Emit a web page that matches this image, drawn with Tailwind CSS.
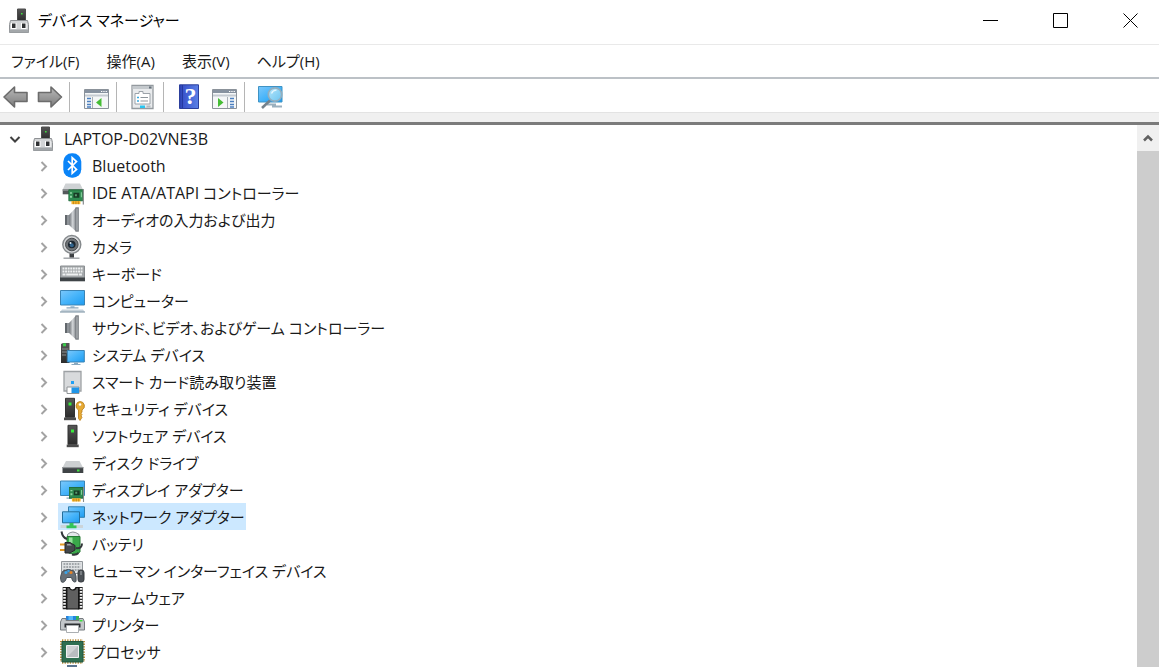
<!DOCTYPE html>
<html lang="ja">
<head>
  <meta charset="UTF-8" />
  <meta name="viewport" content="width=device-width, initial-scale=1.0" />
  <title>デバイス マネージャー</title>
  <script src="https://cdn.jsdelivr.net/npm/@tailwindcss/browser@4"></script>
</head>
<body class="flex h-screen flex-col overflow-hidden bg-white font-['Open_Sans','Noto_Sans_CJK_JP',sans-serif] text-[15px] leading-[27px] text-[#1a1a1a] [font-feature-settings:'palt']">

  <!-- icon sprite, kept in the render tree so its gradients resolve -->
  <svg class="absolute size-0" aria-hidden="true">
    <defs>
      <linearGradient id="gBlue" x1="0" y1="0" x2="1" y2="1"><stop offset="0" stop-color="#7cc8fb" /><stop offset=".5" stop-color="#46b4fa" /><stop offset="1" stop-color="#1e9bf0" /></linearGradient>
      <linearGradient id="gSky" x1="0" y1="0" x2="1" y2="1"><stop offset="0" stop-color="#b4e6fb" /><stop offset="1" stop-color="#6cc4f0" /></linearGradient>
      <linearGradient id="gSteel" x1="0" y1="0" x2="1" y2="0"><stop offset="0" stop-color="#777b80" /><stop offset=".5" stop-color="#d4d7da" /><stop offset="1" stop-color="#7d8186" /></linearGradient>
      <linearGradient id="gArrow" x1="0" y1="0" x2="0" y2="1"><stop offset="0" stop-color="#b9b9b9" /><stop offset="1" stop-color="#7c7c7c" /></linearGradient>
      <linearGradient id="gDark" x1="0" y1="0" x2="0" y2="1"><stop offset="0" stop-color="#565656" /><stop offset="1" stop-color="#2c2c2c" /></linearGradient>
      <linearGradient id="gLight" x1="0" y1="0" x2="0" y2="1"><stop offset="0" stop-color="#eceeef" /><stop offset="1" stop-color="#b4b8bb" /></linearGradient>
      <linearGradient id="gHelp" x1="0" y1="0" x2="1" y2="0"><stop offset="0" stop-color="#2a3fae" /><stop offset=".2" stop-color="#3a55cc" /><stop offset="1" stop-color="#5b80e6" /></linearGradient>
    </defs>
    <symbol id="root" viewBox="0 0 22 27">
      <path d="M9.500 2h8v12h-8z" fill="url(#gDark)" stroke="#4c4c4c" />
      <path d="M13 6h1.600v1.600H13z" fill="#3fe03f" />
      <path d="M2.500 13.500h17l1 4v8h-19v-8z" fill="#d3d5d7" stroke="#8e9194" />
      <path d="M1.500 22.500h19v3h-19z" fill="#a3a7aa" />
      <path d="M3 16h5.500v6H3zM13 16h5.500v6H13z" fill="#fff" />
      <path d="M4 16.500h3.500v4.500H4zM14 16.500h3.500v4.500H14z" fill="#303234" />
    </symbol>
    <symbol id="bluetooth" viewBox="0 0 26 27">
      <rect x="4.300" y="1.200" width="18" height="24.500" rx="8.500" fill="#0a84f8" />
      <path d="M9 9l8.500 8.500-4.300 3.800V5.700l4.300 3.800L9 18" fill="none" stroke="#fff" stroke-width="1.700" />
    </symbol>
    <symbol id="card" viewBox="0 0 16 16">
      <path d="M0 1h14.500v11H0z" fill="#2e8b50" stroke="#1f6a3a" />
      <path d="M5 4h6v5H5z" fill="#173b25" />
      <path d="M6.500 5.500h2v2h-2z" fill="#5a9b70" />
      <path d="M1.500 3.500h2v1.500h-2zM1.500 7h2v2h-2zM12.500 3.500h1v5h-1z" fill="#8ed6a4" />
      <path d="M3 12.200h9v3.300H3z" fill="#f5b52c" />
      <path d="M5 12.500v3M7.500 12.500v3M10 12.500v3" stroke="#a8690c" stroke-width=".6" />
      <path d="M15 0v16" stroke="#85898c" stroke-width="1.200" />
    </symbol>
    <symbol id="ide" viewBox="0 0 26 27">
      <path d="M6.500 4.500h14.500l3 6H3.700z" fill="#cfd2d4" />
      <path d="M3.700 10.300h20.300v5H3.700z" fill="#55595c" />
      <path d="M3.700 10.300h20.300v1.500H3.700z" fill="#8f9396" />
      <use href="#card" x="9.500" y="9.800" width="15.800" height="16" />
    </symbol>
    <symbol id="speaker" viewBox="0 0 26 27">
      <path d="M6 9h5v10H6z" fill="#63686d" />
      <path d="M8 9h3v10H8z" fill="#8f9499" />
      <path d="M10.500 8.500L17 1.500v24l-6.500-6z" fill="url(#gSteel)" />
      <path d="M16.500 1.300h3.300v24.400h-3.300z" fill="#74797e" />
      <path d="M17.500 2.500h1v22h-1z" fill="#bfc3c6" />
    </symbol>
    <symbol id="camera" viewBox="0 0 26 27">
      <path d="M4.500 25.200h16" stroke="#9da1a4" stroke-width="1.400" />
      <path d="M10.500 20h4.500v4.500h-4.500z" fill="#3c3f42" />
      <circle cx="12.800" cy="11.500" r="9" fill="#d5d7d9" stroke="#85898c" stroke-width="1.400" />
      <circle cx="12.800" cy="11.500" r="6.300" fill="#6e7276" stroke="#4a4d50" />
      <circle cx="12.800" cy="11.500" r="3.800" fill="#1c2630" />
      <circle cx="12.800" cy="12.200" r="2" fill="#30648e" />
      <circle cx="11.500" cy="9.900" r="1" fill="#dceaf4" />
    </symbol>
    <symbol id="keyboard" viewBox="0 0 26 27">
      <path d="M1.500 6h24v13.500h-24z" fill="#a4a8ab" stroke="#8b8f92" />
      <path d="M3.500 8.500h20M3.500 11.500h20" stroke="#eff1f2" stroke-width="2" stroke-dasharray="1.900 .7" />
      <path d="M3.500 14.500h20" stroke="#eff1f2" stroke-width="2" stroke-dasharray="3 .7 12 .7" />
      <path d="M1 17.500h25v3.800H1z" fill="#3f4447" />
    </symbol>
    <symbol id="computer" viewBox="0 0 26 27">
      <path d="M1.500 3.500h24v14.500h-24z" fill="url(#gBlue)" stroke="#3a84b5" />
      <path d="M11.500 18.500h4v2.500h-4z" fill="#a9c6da" />
      <path d="M7.500 20.300h12v1.200h-12z" fill="#87a3b8" />
      <path d="M3 22.500h21l2 2.700H1z" fill="#c5d1da" />
      <path d="M1 24.500h25v1H1z" fill="#8298a8" />
    </symbol>
    <symbol id="system" viewBox="0 0 26 27">
      <path d="M2 3l2-1h6.500v20H2z" fill="url(#gDark)" />
      <path d="M4 2.300h3v3H4z" fill="#39c94a" />
      <path d="M3 8h6.500M3 11h5M3 14h4" stroke="#8b8f92" />
      <path d="M8.300 9.500h17v11.500h-17z" fill="url(#gBlue)" stroke="#3a84b5" />
      <path d="M15 21.500h4v1.500h-4zM12.500 23h9v1h-9z" fill="#8aa9bf" />
    </symbol>
    <symbol id="smartcard" viewBox="0 0 26 27">
      <path d="M5 3.500h17v19.500H5z" fill="#d8dadc" stroke="#9da1a4" stroke-width="1.300" />
      <path d="M12 13h3v3h-3z" fill="#20a0f5" />
      <path d="M8 19h12v6.500H8z" fill="#fff" stroke="#8f9396" />
      <path d="M12.500 19.500h7.500v5.500h-7.500z" fill="#2196e8" />
    </symbol>
    <symbol id="security" viewBox="0 0 26 27">
      <path d="M6.500 3.300h9v19h-9z" fill="url(#gDark)" stroke="#333" />
      <path d="M5 22.500h12v2.700H5z" fill="#4b4b4b" />
      <path d="M9.500 7.500h3v3h-3z" fill="#38e83c" />
      <path d="M21 6.500a4.500 4.500 0 0 1 2 8.500v2l-1 1.300 1 1.300-1 1.300 1 1.400-2 3.200-1.500-2V15a4.500 4.500 0 0 1 1.500-8.500z" fill="#e6aa35" stroke="#b87c17" stroke-width=".8" />
      <circle cx="21" cy="9.500" r="1.300" fill="#fff" />
    </symbol>
    <symbol id="software" viewBox="0 0 26 27">
      <path d="M9 3.300h9v19H9z" fill="url(#gDark)" stroke="#333" />
      <path d="M7.700 22.500h12v2.700h-12z" fill="#4b4b4b" />
      <path d="M12 7.500h3v3h-3z" fill="#38e83c" />
    </symbol>
    <symbol id="disk" viewBox="0 0 26 27">
      <path d="M7 12h13.500l3.500 6.500H3.500z" fill="#cdd0d2" />
      <path d="M3.500 18h20.800v6H3.500z" fill="#3f4346" />
      <path d="M3.500 18h20.800v1.200H3.500z" fill="#8e9295" />
      <path d="M18 20.500h2.500v2H18z" fill="#3fe03f" />
    </symbol>
    <symbol id="display" viewBox="0 0 26 27">
      <path d="M1.500 5h24v14.500h-24z" fill="url(#gBlue)" stroke="#3a84b5" />
      <path d="M7.500 21.500h5v1.200h-5z" fill="#87a3b8" />
      <use href="#card" x="10" y="10.500" width="15.500" height="15.500" />
    </symbol>
    <symbol id="network" viewBox="0 0 26 27">
      <path d="M1.500 22h22.500v3H1.500z" fill="#ccd4d9" />
      <path d="M9.500 3.800h16v10.500h-16z" fill="url(#gBlue)" stroke="#2f7fae" />
      <path d="M3.500 8.800h17v11h-17z" fill="url(#gBlue)" stroke="#236f9c" />
      <path d="M10.500 20h4v2.500h3v2.800h-10v-2.800h3z" fill="#33c35a" />
    </symbol>
    <symbol id="battery" viewBox="0 0 26 27">
      <path d="M8.500 4.500q5-5 11.500 0v3H8.500z" fill="#e3e7e9" stroke="#8b9094" />
      <path d="M8 6.500h13V22q-6.500 4-13 0z" fill="#3aa84a" stroke="#247a33" />
      <path d="M10 7.500h3.500v15H10z" fill="#96e29b" />
      <path d="M2.500 1.500q1 6 5.500 7.500M17 18q6 1 6-4.500M13 24.500q4 1 6.500-1.500" fill="none" stroke="#33373a" stroke-width="2" />
      <path d="M1 14.500h5.500M1 20h5.500" stroke="#e39b25" stroke-width="1.800" />
      <path d="M6 12.500h5l5 3v4.500l-5 3H6z" fill="#44484b" stroke="#232628" />
      <path d="M8 14h3l2 1.500H8z" fill="#9ca1a5" />
    </symbol>
    <symbol id="hid" viewBox="0 0 26 27">
      <path d="M2.500 4.500h21v12h-21z" fill="#dfe2e4" stroke="#92979b" />
      <path d="M4.500 7h17M4.500 10h17M4.500 13h17" stroke="#8d9296" stroke-width="1.600" stroke-dasharray="1.800 1" />
      <path d="M4 14q5-3 11 0 3 5 2 10.500-3 2-4.500-4h-5q-1.500 6-5 4.500Q0 20 4 14z" fill="#687077" stroke="#485057" />
      <circle cx="7" cy="15.500" r="1.500" fill="#39a6ec" /><circle cx="12" cy="15.500" r="1.500" fill="#e78325" />
      <circle cx="9.500" cy="14" r="1.200" fill="#3d9dde" />
      <rect x="19" y="13" width="6" height="12" rx="2.500" fill="#4b5055" stroke="#34383c" />
      <path d="M22 14v4" stroke="#a8adb1" />
    </symbol>
    <symbol id="firmware" viewBox="0 0 26 27">
      <path d="M3.700 3h5v22.300h-5zM18.700 3h5v22.300h-5z" fill="#222" />
      <path d="M5.500 4v20.500M22 4v20.500" stroke="#f4f4f4" stroke-width="2.600" stroke-dasharray="1.700 1.300" />
      <path d="M7.800 3.500h2.700q.5 2.500 3.200 2.500T17 3.500h2.700v21.500H7.800z" fill="#606060" stroke="#111" stroke-width="1.200" />
    </symbol>
    <symbol id="printer" viewBox="0 0 26 27">
      <path d="M7 5h13v5H7z" fill="#2584df" />
      <path d="M9.500 5H14v5H9.500z" fill="#55b8fa" /><path d="M17 5h3v4h-3z" fill="#35b35a" />
      <path d="M3 7.500h4v2h13v-2h4l1.500 3.500v8h-24v-8z" fill="#c2c6c9" stroke="#777c80" />
      <path d="M5.500 12.500h16v4h-16z" fill="#2c2f32" />
      <path d="M20.500 9h3v1.500h-3z" fill="#3fe03f" />
      <path d="M7.500 14.500h12v7h-12z" fill="#fff" stroke="#abafb2" />
    </symbol>
    <symbol id="processor" viewBox="0 0 26 27">
      <path d="M3 2.300h21M3 24.700h21" stroke="#bb9140" stroke-width="2" stroke-dasharray="1.300 1.300" />
      <path d="M2 3v21M25 3v21" stroke="#bb9140" stroke-width="2" stroke-dasharray="1.300 1.300" />
      <path d="M3 3.500h21v20.500H3z" fill="#2f6f51" stroke="#205640" />
      <path d="M7.500 7.500h12v12h-12z" fill="#d0d3d5" stroke="#f1f2f2" />
      <path d="M8 19l11-11v11z" fill="#b9bdc0" />
    </symbol>
    <symbol id="port" viewBox="0 0 26 27">
      <path d="M8 0h10v5H8z" fill="#5b7590" />
    </symbol>
  </svg>

  <header class="flex h-[45px] shrink-0 items-center border-b border-[#e9e9e9] text-black">
    <svg class="mb-1 ml-2 h-[27px] w-[22px]"><use href="#root" /></svg>
    <h1 class="ml-2 grow pb-1">デバイス マネージャー</h1>
    <div class="flex gap-[14px] pb-[3px]">
      <button class="flex h-10 w-14 items-center justify-center" aria-label="最小化">
        <svg class="size-4" viewBox="0 0 16 16" stroke="#000"><path d="M0 7.500h15" /></svg>
      </button>
      <button class="flex h-10 w-14 items-center justify-center" aria-label="最大化">
        <svg class="size-4" viewBox="0 0 16 16" fill="none" stroke="#000"><path d="M.5.5h14v14H.5z" /></svg>
      </button>
      <button class="flex h-10 w-14 items-center justify-center" aria-label="閉じる">
        <svg class="size-4" viewBox="0 0 16 16" stroke="#000"><path d="M.5.5l14 14M14.500.5l-14 14" /></svg>
      </button>
    </div>
  </header>

  <nav class="flex h-[34px] shrink-0 items-center gap-[27px] border-b-2 border-[#bcc1c6] pl-[11px]">
    <button>ファイル(F)</button>
    <button>操作(A)</button>
    <button>表示(V)</button>
    <button>ヘルプ(H)</button>
  </nav>

  <div class="flex h-[33px] shrink-0 pt-[3px]" role="toolbar" aria-label="ツール バー">
    <div class="flex gap-[9px] border-r border-[#b5b5b5] pr-[6px] pb-px pl-[2px]">
      <button aria-label="戻る"><svg class="size-[26px]" viewBox="0 0 26 26"><path d="M2 13L12.500 3v5.500H25v9H12.500V23z" fill="url(#gArrow)" stroke="#6c6c6c" stroke-width="1.600" stroke-linejoin="round" /></svg></button>
      <button aria-label="進む"><svg class="size-[26px]" viewBox="0 0 26 26"><path d="M24.500 13L14 3v5.500H1.500v9H14V23z" fill="url(#gArrow)" stroke="#6c6c6c" stroke-width="1.600" stroke-linejoin="round" /></svg></button>
    </div>
    <div class="flex border-r border-[#b5b5b5] pr-[7px] pb-px pl-[13px]">
      <button aria-label="コンソール ツリーの表示"><svg class="size-[26px]" viewBox="0 0 26 26">
        <path d="M1.500 5.500h24v19h-24z" fill="#f5f7f8" stroke="#8b929a" />
        <path d="M2 6h23v3H2z" fill="#8792a0" /><path d="M18 7.500h6" stroke="#fff" stroke-dasharray="1.300 1" />
        <path d="M2 10.500h23v2H2z" fill="#c5cbd2" />
        <path d="M9.500 13v11" stroke="#a9afb6" /><path d="M4 14.500h4M4 17.500h4M4 20.500h4M4 23h4" stroke="#4b7fc0" stroke-width="1.500" />
        <path d="M18.500 14v9L13 18.500z" fill="#45bd35" />
      </svg></button>
    </div>
    <div class="flex border-r border-[#b5b5b5] pr-[7px] pb-px pl-[13px]">
      <button aria-label="プロパティ"><svg class="size-[26px]" viewBox="0 0 26 26">
        <path d="M2 1.500h21v23H2z" fill="#e9ebed" stroke="#949a9f" stroke-width="1.300" />
        <path d="M2.500 2h20v3h-20z" fill="#c4c9cd" /><path d="M19 2.500h2.500v2H19z" fill="#66707a" />
        <path d="M5 9.500h4v-2h4v2h7v10.500H5z" fill="#fff" stroke="#9ca3aa" />
        <path d="M7 13.500h2M7 17h2" stroke="#36a9df" stroke-width="1.600" /><path d="M10.500 13.500h7.500M10.500 17h7.500" stroke="#8d959c" stroke-width="1.200" />
        <path d="M10 21.500h5v2.500h-5z" fill="#27c5f1" /><path d="M16.500 21.500h4v2h-4z" fill="#b3bac0" />
      </svg></button>
    </div>
    <div class="flex gap-[9px] border-r border-[#b5b5b5] pr-[6px] pb-px pl-[13px]">
      <button aria-label="ヘルプ"><svg class="size-[26px]" viewBox="0 0 26 26">
        <path d="M2.500.8h19v23.700h-19z" fill="url(#gHelp)" stroke="#2c3f9c" />
        <path d="M5.500 1v23" stroke="#2439a0" />
        <text x="13.500" y="20" text-anchor="middle" font-family="Liberation Serif" font-size="24" font-weight="bold" fill="#fff">?</text>
      </svg></button>
      <button aria-label="操作ウィンドウの表示"><svg class="size-[26px]" viewBox="0 0 26 26">
        <path d="M.5 5.500h24v19H.5z" fill="#f5f7f8" stroke="#8b929a" />
        <path d="M1 6h23v3H1z" fill="#8792a0" /><path d="M17 7.500h6" stroke="#fff" stroke-dasharray="1.300 1" />
        <path d="M1 10.500h23v2H1z" fill="#c5cbd2" />
        <path d="M15.500 13v11" stroke="#a9afb6" /><path d="M18 14.500h4M18 17.500h4M18 20.500h4M18 23h4" stroke="#4b7fc0" stroke-width="1.500" />
        <path d="M6 14v9l5.500-4.500z" fill="#45bd35" />
      </svg></button>
    </div>
    <div class="flex pb-px pl-[13px]">
      <button aria-label="ハードウェア変更のスキャン"><svg class="size-[26px]" viewBox="0 0 26 26">
        <path d="M.5 2.500h23.500v15.500H.5z" fill="url(#gBlue)" stroke="#3f93c4" />
        <path d="M9 20.500h9M14 22.500h10" stroke="#9bb0be" stroke-width="1.800" />
        <path d="M12 16.500l-8 7.500" stroke="#75828c" stroke-width="2.600" />
        <circle cx="17" cy="10.500" r="6.700" fill="url(#gSky)" stroke="#92aebf" stroke-width="1.700" />
        <path d="M13.500 9.500q1.500-3.500 5-3.300" fill="none" stroke="#e6f7fe" stroke-width="1.300" />
      </svg></button>
    </div>
  </div>

  <div class="h-[13px] shrink-0 border-t border-b-3 border-t-[#e3e3e3] border-b-[#7b7b7b] bg-[#f0f0f0]"></div>

  <main class="flex min-h-0 grow">
    <div class="min-w-0 grow overflow-hidden">
      <div class="flex h-[27px] items-center">
        <button class="ml-2 flex h-full w-[14px] items-center justify-center" aria-label="折りたたむ">
          <svg class="size-[14px]" viewBox="0 0 14 14" fill="none" stroke="#404040" stroke-width="2"><path d="M2.500 5L7 9.500 11.500 5" /></svg>
        </button>
        <svg class="ml-[10px] h-[27px] w-[22px]"><use href="#root" /></svg>
        <span class="pt-px pl-[10px] text-base">LAPTOP-D02VNE3B</span>
      </div>
      <ul id="deviceTree"></ul>
    </div>
    <div class="flex w-[22px] shrink-0 flex-col bg-[#cdcdcd]">
      <button class="flex h-[26px] items-center justify-center bg-[#f0f0f0]" aria-label="上へスクロール">
        <svg class="size-[14px]" viewBox="0 0 14 14" fill="none" stroke="#606060" stroke-width="2.500"><path d="M3 9.500l4-4 4 4" /></svg>
      </button>
    </div>
  </main>

  <script>
    const devices = [
      { icon: 'bluetooth', latin: 'Bluetooth', name: '' },
      { icon: 'ide', latin: 'IDE ATA/ATAPI', name: ' コントローラー' },
      { icon: 'speaker', name: 'オーディオの入力および出力' },
      { icon: 'camera', name: 'カメラ' },
      { icon: 'keyboard', name: 'キーボード' },
      { icon: 'computer', name: 'コンピューター' },
      { icon: 'speaker', name: 'サウンド、ビデオ、およびゲーム コントローラー' },
      { icon: 'system', name: 'システム デバイス' },
      { icon: 'smartcard', name: 'スマート カード読み取り装置' },
      { icon: 'security', name: 'セキュリティ デバイス' },
      { icon: 'software', name: 'ソフトウェア デバイス' },
      { icon: 'disk', name: 'ディスク ドライブ' },
      { icon: 'display', name: 'ディスプレイ アダプター' },
      { icon: 'network', name: 'ネットワーク アダプター', selected: true },
      { icon: 'battery', name: 'バッテリ' },
      { icon: 'hid', name: 'ヒューマン インターフェイス デバイス' },
      { icon: 'firmware', name: 'ファームウェア' },
      { icon: 'printer', name: 'プリンター' },
      { icon: 'processor', name: 'プロセッサ' },
      { icon: 'port', name: '' }
    ];

    // latin part of a name is set a little larger than the kana
    document.getElementById('deviceTree').innerHTML = devices.map(device => `
      <li class="flex h-[27px] items-center pl-[37px]">
        <button class="flex h-full w-[14px] items-center justify-center" aria-label="展開">
          <svg class="size-[14px]" viewBox="0 0 14 14" fill="none" stroke="#a3a3a3" stroke-width="2"><path d="M4.500 3L9 7.500 4.500 12" /></svg>
        </button>
        <a href="#" class="ml-[7px] flex h-full items-center pr-px pl-px ${device.selected ? 'bg-[#cce8ff]' : ''}">
          <svg class="h-[27px] w-[26px]"><use href="#${device.icon}" /></svg>
          <span class="pt-px pl-[7px] whitespace-nowrap">${device.latin ? `<span class="text-base">${device.latin}</span>` : ''}${device.name}</span>
        </a>
      </li>`).join('');
  </script>
</body>
</html>
